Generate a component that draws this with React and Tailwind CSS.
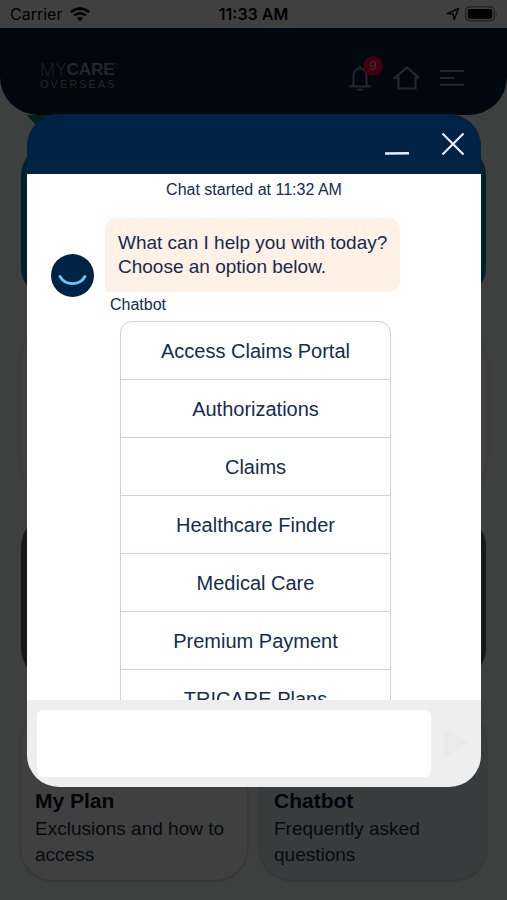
import React, { useState } from "react";

const options = [
  "Access Claims Portal",
  "Authorizations",
  "Claims",
  "Healthcare Finder",
  "Medical Care",
  "Premium Payment",
  "TRICARE Plans",
];

function StatusBar() {
  return (
    <div className="h-7 px-[10px] grid grid-cols-3 items-center bg-white text-black font-[Inter,sans-serif] text-base">
      <div className="flex items-center gap-2">
        <span>Carrier</span>
        <svg width="20" height="15" viewBox="0 0 20 15" aria-hidden="true">
          <g fill="none" stroke="#000" strokeWidth="2.6">
            <path d="M1 5.2C6 .4 14 .4 19 5.2" />
            <path d="M4.2 8.6c3.4-3.2 8.2-3.2 11.6 0" />
          </g>
          <path d="M6.9 11.3c1.8-1.700 4.400-1.700 6.200 0L10 14.5z" />
        </svg>
      </div>
      <span className="text-center font-semibold whitespace-nowrap">
        11:33 AM
      </span>
      <div className="flex items-center justify-end gap-[5px]">
        <svg width="14" height="14" viewBox="0 0 14 14" aria-hidden="true">
          <path
            d="M1.5 6.6 12.5 1.5 8.2 12.6 7.2 7z"
            fill="none"
            stroke="#000"
            strokeWidth="1.4"
            strokeLinejoin="round"
          />
        </svg>
        <svg width="32" height="16" viewBox="0 0 32 16" aria-hidden="true">
          <rect x=".7" y=".9" width="28.6" height="14" rx="4" fill="none" stroke="#777" strokeWidth="1.2" />
          <rect x="2.8" y="3" width="24.4" height="9.8" rx="2" />
          <path d="M30.8 5.5c1.2.8 1.2 3.8 0 4.6z" fill="#777" />
        </svg>
      </div>
    </div>
  );
}

function TopBar() {
  return (
    <header className="h-[87px] pl-10 pr-[43px] pt-3 flex items-center justify-between rounded-b-[38px] bg-[#001c3c]">
      <a href="#home" className="block pb-1 text-[#9498a8]">
        <span className="flex items-start text-[17px] leading-4">
          <span className="font-[Inter,sans-serif] font-extralight">MY</span>
          <span className="font-bold">CARE</span>
          <span className="text-[4px] leading-[6px]">™</span>
        </span>
        <span className="block text-[11px] leading-3 tracking-[2px]">
          OVERSEAS
        </span>
      </a>

      <nav className="flex items-center gap-[21px] text-[#78a8bc]">
        <button aria-label="Notifications" className="relative">
          <svg width="24" height="26" viewBox="0 0 24 26" fill="none" stroke="currentColor" strokeWidth="2">
            <path d="M1 21.500h22M4 21c1.300-1 1.500-2.500 1.500-4v-6C5.500 6.500 8 3.600 12 3.600s6.500 2.900 6.500 7.400v6c0 1.500.2 3 1.500 4M12 .8v2.800M9.300 23.800c1.500 1.500 3.900 1.500 5.400 0" />
          </svg>
          <span className="absolute -top-[9px] left-[15px] size-5 rounded-full bg-[#ff0040] text-[#ffb8c8] text-[13px] leading-5 text-center">
            9
          </span>
        </button>
        <button aria-label="Home">
          <svg width="26" height="26" viewBox="0 0 26 26" fill="none" stroke="currentColor" strokeWidth="2.200">
            <path d="M2 12.800h3.500v10.700h17V12.800H26L14 2.500z" />
          </svg>
        </button>
        <button aria-label="Menu">
          <svg width="24" height="18" viewBox="0 0 24 18" fill="none" stroke="currentColor" strokeWidth="2">
            <path d="M0 2h24M0 9h14.5M0 15.700h24" />
          </svg>
        </button>
      </nav>
    </header>
  );
}

function PlanCard({ title, text, className }) {
  return (
    <a
      href="#card"
      className={`flex-1 min-w-0 h-[170px] px-[14px] pb-3 flex flex-col justify-end rounded-[32px] shadow-[0_1px_3px_rgba(0,40,40,0.3)] ${className}`}
    >
      <h2 className="text-[21px] leading-[30px] font-bold text-[#001430]">
        {title}
      </h2>
      <p className="text-[19px] leading-[26px] text-[#1c2840]">{text}</p>
    </a>
  );
}

function ChatDialog() {
  const [message, setMessage] = useState("");

  return (
    <div
      role="dialog"
      aria-label="Chat"
      className="flex-1 min-h-0 flex flex-col text-[#142c50]"
    >
      <div className="h-[60px] shrink-0 pr-4 flex items-center justify-end gap-8 rounded-t-[32px] bg-[#002244] text-[#e6f0fc]">
        <button aria-label="Minimize">
          <svg width="24" height="24" viewBox="0 0 24 24" stroke="currentColor" strokeWidth="2.5">
            <path d="M0 21.5 24 21.3" />
          </svg>
        </button>
        <button aria-label="Close">
          <svg width="24" height="24" viewBox="0 0 24 24" stroke="currentColor" strokeWidth="2.2">
            <path d="M1.5 1.5 22.5 22.5M22.5 1.5 1.5 22.5" />
          </svg>
        </button>
      </div>

      <div className="flex-1 min-h-0 pt-1 bg-white overflow-y-auto [scrollbar-width:none]">
        <p className="text-center text-base leading-6">
          Chat started at 11:32 AM
        </p>

        {/* Bot message */}
        <div className="mt-4 pl-6 pr-4 flex items-start gap-[11px]">
          <svg width="43" height="43" viewBox="0 0 43 43" className="mt-9 shrink-0" aria-hidden="true">
            <circle cx="21.5" cy="21.5" r="21.5" fill="#002244" />
            <path
              d="M9 22.500c5.500 9.500 19.500 9.500 25 0"
              fill="none"
              stroke="#6cc5ee"
              strokeWidth="2.8"
              strokeLinecap="round"
            />
          </svg>
          <div>
            <p className="w-fit px-[13px] py-[13px] rounded-xl rounded-bl-none bg-[#fff1e5] text-[19px] leading-6">
              What can I help you with today?
              <br />
              Choose an option below.
            </p>
            <p className="pl-[5px] text-base leading-[26px]">Chatbot</p>
          </div>
        </div>

        <div className="mt-[3px] pl-[93px] pr-[90px]">
          <ul className="border border-[#d0d0e0] rounded-xl divide-y divide-[#d0d0e0]">
            {options.map((option) => (
              <li key={option}>
                <button className="w-full h-[57px] text-[20px]">{option}</button>
              </li>
            ))}
          </ul>
        </div>
      </div>

      <form
        onSubmit={(e) => e.preventDefault()}
        className="shrink-0 p-[10px] flex items-center gap-3 rounded-b-[32px] bg-[#eeeeee]"
      >
        <textarea
          aria-label="Message"
          value={message}
          onChange={(e) => setMessage(e.target.value)}
          className="flex-1 min-w-0 h-[67px] p-2 rounded-md bg-white resize-none outline-none text-lg"
        />
        <button aria-label="Send" className="text-[#eaeaea]">
          <svg width="28" height="32" viewBox="0 0 28 32" fill="currentColor">
            <path d="M1 1 27 14.500 1 31z" />
          </svg>
        </button>
      </form>
    </div>
  );
}

export default function App() {
  return (
    <div className="relative min-h-screen flex flex-col bg-[#f6fcf9] font-['Liberation_Sans',Arial,sans-serif]">
      <StatusBar />
      <TopBar />

      <main className="px-[21px] pb-5 flex flex-col">
        <svg width="60" height="30" viewBox="0 0 60 30" aria-hidden="true">
          <path d="M6 0h50v30C35 24 14 12 6 0z" fill="#0c8450" />
        </svg>
        <section className="h-[153px] rounded-[30px] bg-[#0084bc]" />
        <section className="mt-8 h-[160px] rounded-[30px] bg-[#fbfdfc] shadow-[0_0_4px_rgba(80,60,60,0.2)]" />
        <section className="mt-[26px] h-[163px] rounded-[30px] bg-[#606466]" />
        <div className="mt-[31px] flex gap-[13px]">
          <PlanCard
            title="My Plan"
            text="Exclusions and how to access"
            className="bg-white"
          />
          <PlanCard
            title="Chatbot"
            text="Frequently asked questions"
            className="bg-[#dcf0f0]"
          />
        </div>
      </main>

      {/* Overlay */}
      <div className="fixed inset-0 pl-[27px] pr-[26px] pt-[114px] pb-[113px] flex flex-col bg-black/75">
        <ChatDialog />
      </div>
    </div>
  );
}
